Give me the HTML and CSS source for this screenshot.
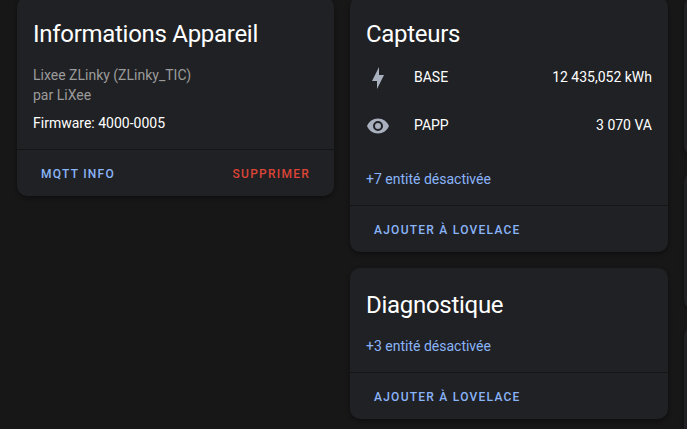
FILE: index.html
```html
<!DOCTYPE html>
<html lang="fr">
<head>
    <meta charset="UTF-8">
    <meta name="viewport" content="width=device-width, initial-scale=1.0">
    <title>Informations Appareil</title>
    <link rel="stylesheet" href="styles.css">
</head>
<body>
    <main class="columns">
        <div class="column">
            <section class="card">
                <h1>Informations Appareil</h1>
                <div class="card-content">
                    <div class="model">Lixee ZLinky (ZLinky_TIC)</div>
                    <div class="model">par LiXee</div>
                    <div class="firmware">Firmware: 4000-0005</div>
                </div>
                <div class="card-actions">
                    <button type="button">MQTT Info</button>
                    <button type="button" class="warning">Supprimer</button>
                </div>
            </section>
        </div>

        <div class="column">
            <section class="card">
                <h1>Capteurs</h1>
                <ul class="entities">
                    <li>
                        <svg class="icon" viewBox="0 0 24 24"><path d="M11 15H6L13 1V9H18L11 23V15Z"/></svg>
                        <span class="name">BASE</span>
                        <span>12&nbsp;435,052 kWh</span>
                    </li>
                    <li>
                        <svg class="icon" viewBox="0 0 24 24"><path d="M12,9A3,3 0 0,0 9,12A3,3 0 0,0 12,15A3,3 0 0,0 15,12A3,3 0 0,0 12,9M12,17A5,5 0 0,1 7,12A5,5 0 0,1 12,7A5,5 0 0,1 17,12A5,5 0 0,1 12,17M12,4.5C7,4.5 2.73,7.61 1,12C2.73,16.39 7,19.5 12,19.5C17,19.5 21.27,16.39 23,12C21.27,7.61 17,4.5 12,4.5Z"/></svg>
                        <span class="name">PAPP</span>
                        <span>3&nbsp;070 VA</span>
                    </li>
                </ul>
                <div class="card-content">
                    <button type="button" class="show-more">+7 entité désactivée</button>
                </div>
                <div class="card-actions">
                    <button type="button">Ajouter à Lovelace</button>
                </div>
            </section>

            <section class="card">
                <h1>Diagnostique</h1>
                <div class="card-content">
                    <button type="button" class="show-more">+3 entité désactivée</button>
                </div>
                <div class="card-actions">
                    <button type="button">Ajouter à Lovelace</button>
                </div>
            </section>
        </div>

        <div class="column column-side">
            <div class="card card-automation"></div>
            <div class="card card-scene"></div>
            <div class="card card-script"></div>
        </div>
    </main>
</body>
</html>
```

FILE: styles.css
```css
* {
    box-sizing: border-box;
}
body {
    margin: 0;
    overflow: hidden;
    background-color: #171717;
    color: #fff;
    font-family: Roboto, "Liberation Sans", sans-serif;
    font-size: 14px;
    line-height: 20px;
}
.columns {
    display: grid;
    grid-template-columns: 317fr 318fr 3px;
    gap: 16px;
    margin-top: -3px;
    padding-left: 17px;
}
.column {
    display: flex;
    flex-direction: column;
    gap: 16px;
}
.card {
    background-color: #202124;
    border-radius: 10px;
    box-shadow: 0 2px 4px rgba(0, 0, 0, 0.4);
}
h1 {
    margin: 0;
    padding: 14px 16px 0;
    font-size: 24px;
    font-weight: 400;
    line-height: 46px;
    letter-spacing: -0.012em;
}
.card-content {
    padding: 8px 16px 16px;
}
.model {
    color: #9b9b9b;
}
.firmware {
    margin-top: 8px;
}
.card-actions {
    display: flex;
    justify-content: space-between;
    padding: 6px 16px 4px;
    border-top: 1px solid #151515;
}
button {
    border: none;
    background: none;
    color: #8ab4f8;
    font: inherit;
    cursor: pointer;
}
.card-actions button {
    height: 36px;
    padding: 0 8px;
    font-size: 12px;
    font-weight: 500;
    letter-spacing: 0.104em;
    text-transform: uppercase;
}
.card-actions .warning {
    color: #db4437;
}
.card-content .show-more {
    display: block;
    padding: 0;
}
.entities {
    display: flex;
    flex-direction: column;
    gap: 8px;
    margin: 0;
    padding: 0 16px 16px;
    list-style: none;
}
.entities li {
    display: flex;
    align-items: center;
    height: 40px;
}
.icon {
    width: 24px;
    height: 24px;
    margin: 2px 24px 0 0;
    fill: #a8b0be;
}
.name {
    flex: 1;
}
.column-side .card {
    flex: none;
    width: 320px;
}
.card-automation,
.card-script {
    height: 159px;
}
.card-scene {
    height: 138px;
}
```
